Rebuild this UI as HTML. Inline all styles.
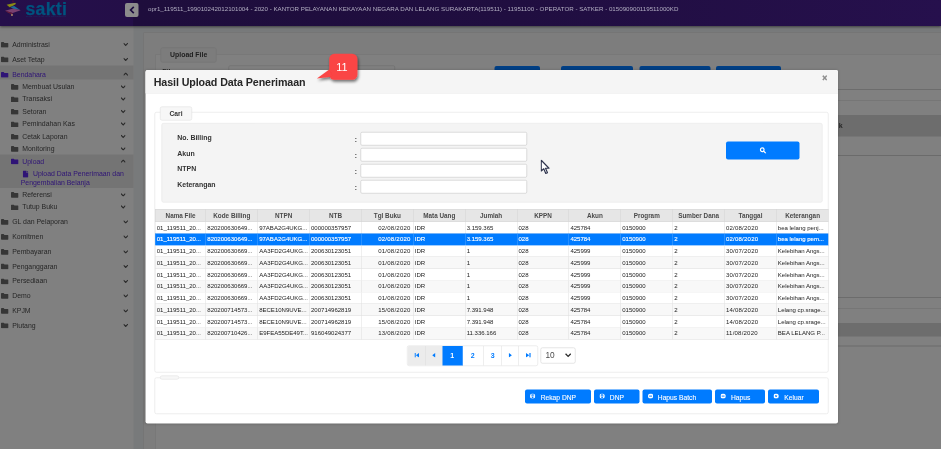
<!DOCTYPE html>
<html><head><meta charset="utf-8"><title>SAKTI</title>
<style>
html,body{margin:0;padding:0}
body{width:941px;height:449px;overflow:hidden;background:#787a7b;font-family:"Liberation Sans",sans-serif}
#w{position:absolute;left:0;top:0;width:1882px;height:898px;transform:scale(.5);transform-origin:0 0;overflow:hidden;background:#787a7b}
#w div,#w span,#w svg{position:absolute;box-sizing:border-box;white-space:nowrap}
#hdr{left:0;top:0;width:1882px;height:52px;background:linear-gradient(90deg,#250f4b 0%,#240f48 14.1%,#1e0d3c 14.2%,#200e40 55%,#26104d 100%);box-shadow:0 1px 5px rgba(0,0,0,.5)}
#logo-t{left:50.8px;top:-2.6px;font-size:35.4px;font-weight:bold;color:#00547f;letter-spacing:0.6px;line-height:40px;-webkit-text-stroke:0.5px #00547f}
#logo-s{left:52px;top:31.2px;font-size:3.24px;color:#1c2e66;letter-spacing:0.04px;line-height:4px;font-weight:bold}
#tog{left:250px;top:6px;width:27.2px;height:28px;background:#8c8c8c;border-radius:4px}
#htxt{left:296px;top:9.2px;font-size:12.42px;line-height:16px;color:#b2aec2;letter-spacing:-0.03px}
#side{left:0;top:51.2px;width:267px;height:848px;background:#808080}
.hl{left:0;width:267px;background:#747474}
.mi{height:20px;font-size:13.8px;line-height:20px;color:#262626}
.mi span{top:0}
.mi .fi{left:0;top:4.6px;width:15.2px;height:11.8px;fill:#363636}
.mi .fi2{left:0;top:2.8px;width:12.4px;height:14.4px;fill:#2f1476}
.mi.act{color:#2f1476}
.mi.act .fi{fill:#2f1476}
.ch{width:8.8px;height:7.2px;fill:none;stroke:#2a2a2a;stroke-width:1.100}
#panel{left:287px;top:64.6px;width:1640px;height:860px;background:#7d7d7d;border:1px solid #707070}
#ufs{left:310.8px;top:108.8px;width:1600px;height:840px;background:#808080;border:1px solid #727272}
#uleg{left:321.4px;top:94.8px;width:111.8px;height:29.8px;background:#7c7c7c;border:1px solid #727272;border-radius:4px;font-size:13.8px;font-weight:bold;color:#1e1e1e;text-align:center;line-height:27.6px}
.bl{height:1.2px;background:#6c6c6c;left:312px;width:1580px}
.band{left:312px;width:1580px;background:#6d6d6d}
.bbtn{top:132.4px;height:24px;background:#003f85;border-radius:4px}
#modal{left:290.8px;top:140.2px;width:1385.2px;height:706.8px;background:#fff;border-radius:4px;box-shadow:0 1px 6px rgba(0,0,0,.22)}
#mhead{left:290.8px;top:140.2px;width:1385.2px;height:46.8px;background:#f5f5f5;border-bottom:1px solid #d6d6d6;border-radius:4px 4px 0 0}
#mtitle{left:307.4px;top:150.8px;font-size:21.4px;font-weight:bold;color:#262626;line-height:28px;letter-spacing:-0.2px}
#mclose{left:1642.6px;top:147.4px;font-size:17px;font-weight:bold;color:#888;line-height:20px;width:14px;text-align:center;-webkit-text-stroke:0.7px #888}
.fs{border:1px solid #ddd;border-radius:4px;background:#fff}
.leg{background:#f7f7f7;border:1px solid #ddd;border-radius:4px;font-size:13.4px;font-weight:bold;color:#333;text-align:center}
#ipanel{left:322.6px;top:246px;width:1322.6px;height:158.8px;background:#f4f4f4;border:1px solid #e2e2e2;border-radius:4px}
.lab{left:354.6px;font-size:13.9px;font-weight:bold;color:#333;line-height:20px;height:20px}
.col{left:709.4px;font-size:13px;font-weight:bold;color:#333;line-height:20px;height:20px}
.inp{left:721px;width:333px;height:27px;background:#fff;border:1px solid #bdbdbd;border-radius:3px}
#sbtn{left:1452.2px;top:283.2px;width:146.4px;height:36px;background:#007bff;border-radius:4px}
.th-row{background:#e6e6e6}
.th{font-size:12.7px;font-weight:bold;color:#4a4a4a;text-align:center;border-left:1px solid #d4d4d4;border-top:1px solid #d4d4d4;border-bottom:1px solid #d4d4d4}
.tr.odd{background:#fff}
.tr.even{background:#f8f8f8}
.tr.sel{background:#007bff}
.td{font-size:12.1px;color:#222;padding:0 2.6px 0 2.4px;border-left:1px solid #dedede;border-bottom:1px solid #dedede;overflow:hidden;letter-spacing:-0.04px}
.td.selc{color:#fff;-webkit-text-stroke:0.24px #fff;border-color:#4da3ff #007bff #007bff #4da3ff}
#tright{left:1656.4px;top:418.2px;width:1px;height:260.4px;background:#dedede}
.pgwrap{border:1px solid #ddd;border-radius:4px;background:#fff;overflow:hidden}
.pg{top:0;height:41px;line-height:38.6px;font-size:14px;font-weight:bold;color:#007bff;text-align:center;border-right:1px solid #ddd}
.pg.cur{background:#007bff;color:#fff;border-color:#007bff}
.pg.dis{background:#ececec}
.pi{left:50%;top:50%;width:9.2px;height:9.2px;margin-left:-4.4px;margin-top:-6.4px;fill:#007bff}
#psel{left:1080.8px;top:694.8px;width:70.6px;height:32.4px;border:1px solid #ccc;border-radius:4px;background:#fff;font-size:16.6px;color:#4a4a4a;line-height:30.4px;padding-left:9.2px}
.btn{background:#007bff;border-radius:4px;color:#fff}
.btn .bi{width:10.4px;height:10.4px}
.btn .bi svg{left:0;top:0;width:10.4px;height:10.4px}
.btn .bt{top:0;font-size:13.4px;line-height:32.8px;height:27.8px;color:#fff;-webkit-text-stroke:0.2px #fff}
</style></head><body>
<div id="w">
<!-- background app -->
<div id="panel"></div>
<div id="ufs"></div>
<div id="uleg">Upload File</div>
<div style="left:324.6px;top:133px;font-size:14px;font-weight:bold;color:#2a2a2a;line-height:18px">File</div>
<div style="left:456.6px;top:131.2px;width:333px;height:26px;background:#808080;border:1px solid #6a6a6a;border-radius:3px"></div>
<div class="bbtn" style="left:989px;width:90.6px"></div>
<div class="bbtn" style="left:1122.4px;width:143.6px"></div>
<div class="bbtn" style="left:1278.6px;width:142.2px"></div>
<div class="bbtn" style="left:1432.2px;width:130.2px"></div>
<div class="bl" style="top:178.4px"></div>
<div class="bl" style="top:200.8px"></div>
<div class="band" style="top:229.6px;height:43.8px"></div>
<div style="left:1677.6px;top:241px;font-size:14px;font-weight:bold;color:#262626;line-height:20px">k</div>
<div class="bl" style="top:309.6px;height:2px;background:#6b6b6b"></div>
<div class="bl" style="top:594.4px"></div>
<div class="bl" style="top:615.6px"></div>
<div class="band" style="top:645.6px;height:27.8px"></div>
<div class="bl" style="top:691px;height:2px;background:#6b6b6b"></div>

<div id="side"></div>
<div class="hl" style="top:131px;height:28.4px"></div>
<div class="hl" style="top:309.2px;height:66.4px"></div>
<div class="mi" style="left:2.2px;top:79px"><svg class="fi" viewBox="0 0 16 12"><path d="M0 1.5C0 .7.7 0 1.5 0h4l1.8 1.8h7.2c.8 0 1.5.7 1.5 1.5v7.2c0 .8-.7 1.5-1.5 1.5h-13C.7 12 0 11.300 0 10.500z"/></svg><span style="left:22.2px">Administrasi</span></div>
<svg class="ch" style="left:247.2px;top:85.4px" viewBox="0 0 4.400 3.600"><path d="M0 0.600 L2.2 3 L4.400 0.600"/></svg>
<div class="mi" style="left:2.2px;top:108.8px"><svg class="fi" viewBox="0 0 16 12"><path d="M0 1.5C0 .7.7 0 1.5 0h4l1.8 1.8h7.2c.8 0 1.5.7 1.5 1.5v7.2c0 .8-.7 1.5-1.5 1.5h-13C.7 12 0 11.300 0 10.500z"/></svg><span style="left:22.2px">Aset Tetap</span></div>
<svg class="ch" style="left:247.2px;top:115.2px" viewBox="0 0 4.400 3.600"><path d="M0 0.600 L2.2 3 L4.400 0.600"/></svg>
<div class="mi act" style="left:2.2px;top:139px"><svg class="fi" viewBox="0 0 16 12"><path d="M0 1.5C0 .7.7 0 1.5 0h4l1.8 1.8h7.2c.8 0 1.5.7 1.5 1.5v7.2c0 .8-.7 1.5-1.5 1.5h-13C.7 12 0 11.300 0 10.500z"/></svg><span style="left:22.2px">Bendahara</span></div>
<svg class="ch" style="left:247.2px;top:145.4px" viewBox="0 0 4.400 3.600"><path d="M0 3 L2.2 0.600 L4.400 3"/></svg>
<div class="mi" style="left:2.2px;top:433.2px"><svg class="fi" viewBox="0 0 16 12"><path d="M0 1.5C0 .7.7 0 1.5 0h4l1.8 1.8h7.2c.8 0 1.5.7 1.5 1.5v7.2c0 .8-.7 1.5-1.5 1.5h-13C.7 12 0 11.300 0 10.500z"/></svg><span style="left:22.2px">GL dan Pelaporan</span></div>
<svg class="ch" style="left:247.2px;top:439.6px" viewBox="0 0 4.400 3.600"><path d="M0 0.600 L2.2 3 L4.400 0.600"/></svg>
<div class="mi" style="left:2.2px;top:463.2px"><svg class="fi" viewBox="0 0 16 12"><path d="M0 1.5C0 .7.7 0 1.5 0h4l1.8 1.8h7.2c.8 0 1.5.7 1.5 1.5v7.2c0 .8-.7 1.5-1.5 1.5h-13C.7 12 0 11.300 0 10.500z"/></svg><span style="left:22.2px">Komitmen</span></div>
<svg class="ch" style="left:247.2px;top:469.6px" viewBox="0 0 4.400 3.600"><path d="M0 0.600 L2.2 3 L4.400 0.600"/></svg>
<div class="mi" style="left:2.2px;top:493.2px"><svg class="fi" viewBox="0 0 16 12"><path d="M0 1.5C0 .7.7 0 1.5 0h4l1.8 1.8h7.2c.8 0 1.5.7 1.5 1.5v7.2c0 .8-.7 1.5-1.5 1.5h-13C.7 12 0 11.300 0 10.500z"/></svg><span style="left:22.2px">Pembayaran</span></div>
<svg class="ch" style="left:247.2px;top:499.6px" viewBox="0 0 4.400 3.600"><path d="M0 0.600 L2.2 3 L4.400 0.600"/></svg>
<div class="mi" style="left:2.2px;top:522.8px"><svg class="fi" viewBox="0 0 16 12"><path d="M0 1.5C0 .7.7 0 1.5 0h4l1.8 1.8h7.2c.8 0 1.5.7 1.5 1.5v7.2c0 .8-.7 1.5-1.5 1.5h-13C.7 12 0 11.300 0 10.500z"/></svg><span style="left:22.2px">Penganggaran</span></div>
<svg class="ch" style="left:247.2px;top:529.2px" viewBox="0 0 4.400 3.600"><path d="M0 0.600 L2.2 3 L4.400 0.600"/></svg>
<div class="mi" style="left:2.2px;top:552.4px"><svg class="fi" viewBox="0 0 16 12"><path d="M0 1.5C0 .7.7 0 1.5 0h4l1.8 1.8h7.2c.8 0 1.5.7 1.5 1.5v7.2c0 .8-.7 1.5-1.5 1.5h-13C.7 12 0 11.300 0 10.500z"/></svg><span style="left:22.2px">Persediaan</span></div>
<svg class="ch" style="left:247.2px;top:558.8px" viewBox="0 0 4.400 3.600"><path d="M0 0.600 L2.2 3 L4.400 0.600"/></svg>
<div class="mi" style="left:2.2px;top:581.8px"><svg class="fi" viewBox="0 0 16 12"><path d="M0 1.5C0 .7.7 0 1.5 0h4l1.8 1.8h7.2c.8 0 1.5.7 1.5 1.5v7.2c0 .8-.7 1.5-1.5 1.5h-13C.7 12 0 11.300 0 10.500z"/></svg><span style="left:22.2px">Demo</span></div>
<svg class="ch" style="left:247.2px;top:588.2px" viewBox="0 0 4.400 3.600"><path d="M0 0.600 L2.2 3 L4.400 0.600"/></svg>
<div class="mi" style="left:2.2px;top:611.4px"><svg class="fi" viewBox="0 0 16 12"><path d="M0 1.5C0 .7.7 0 1.5 0h4l1.8 1.8h7.2c.8 0 1.5.7 1.5 1.5v7.2c0 .8-.7 1.5-1.5 1.5h-13C.7 12 0 11.300 0 10.500z"/></svg><span style="left:22.2px">KPJM</span></div>
<svg class="ch" style="left:247.2px;top:617.8px" viewBox="0 0 4.400 3.600"><path d="M0 0.600 L2.2 3 L4.400 0.600"/></svg>
<div class="mi" style="left:2.2px;top:640.8px"><svg class="fi" viewBox="0 0 16 12"><path d="M0 1.5C0 .7.7 0 1.5 0h4l1.8 1.8h7.2c.8 0 1.5.7 1.5 1.5v7.2c0 .8-.7 1.5-1.5 1.5h-13C.7 12 0 11.300 0 10.500z"/></svg><span style="left:22.2px">Piutang</span></div>
<svg class="ch" style="left:247.2px;top:647.2px" viewBox="0 0 4.400 3.600"><path d="M0 0.600 L2.2 3 L4.400 0.600"/></svg>
<div class="mi" style="left:22.2px;top:163.2px"><svg class="fi" viewBox="0 0 16 12"><path d="M0 1.5C0 .7.7 0 1.5 0h4l1.8 1.8h7.2c.8 0 1.5.7 1.5 1.5v7.2c0 .8-.7 1.5-1.5 1.5h-13C.7 12 0 11.300 0 10.500z"/></svg><span style="left:22.4px">Membuat Usulan</span></div>
<svg class="ch" style="left:242px;top:169.6px" viewBox="0 0 4.400 3.600"><path d="M0 0.600 L2.2 3 L4.400 0.600"/></svg>
<div class="mi" style="left:22.2px;top:188px"><svg class="fi" viewBox="0 0 16 12"><path d="M0 1.5C0 .7.7 0 1.5 0h4l1.8 1.8h7.2c.8 0 1.5.7 1.5 1.5v7.2c0 .8-.7 1.5-1.5 1.5h-13C.7 12 0 11.300 0 10.500z"/></svg><span style="left:22.4px">Transaksi</span></div>
<svg class="ch" style="left:242px;top:194.4px" viewBox="0 0 4.400 3.600"><path d="M0 0.600 L2.2 3 L4.400 0.600"/></svg>
<div class="mi" style="left:22.2px;top:213px"><svg class="fi" viewBox="0 0 16 12"><path d="M0 1.5C0 .7.7 0 1.5 0h4l1.8 1.8h7.2c.8 0 1.5.7 1.5 1.5v7.2c0 .8-.7 1.5-1.5 1.5h-13C.7 12 0 11.300 0 10.500z"/></svg><span style="left:22.4px">Setoran</span></div>
<svg class="ch" style="left:242px;top:219.4px" viewBox="0 0 4.400 3.600"><path d="M0 0.600 L2.2 3 L4.400 0.600"/></svg>
<div class="mi" style="left:22.2px;top:238px"><svg class="fi" viewBox="0 0 16 12"><path d="M0 1.5C0 .7.7 0 1.5 0h4l1.8 1.8h7.2c.8 0 1.5.7 1.5 1.5v7.2c0 .8-.7 1.5-1.5 1.5h-13C.7 12 0 11.300 0 10.500z"/></svg><span style="left:22.4px">Pemindahan Kas</span></div>
<svg class="ch" style="left:242px;top:244.4px" viewBox="0 0 4.400 3.600"><path d="M0 0.600 L2.2 3 L4.400 0.600"/></svg>
<div class="mi" style="left:22.2px;top:263px"><svg class="fi" viewBox="0 0 16 12"><path d="M0 1.5C0 .7.7 0 1.5 0h4l1.8 1.8h7.2c.8 0 1.5.7 1.5 1.5v7.2c0 .8-.7 1.5-1.5 1.5h-13C.7 12 0 11.300 0 10.500z"/></svg><span style="left:22.4px">Cetak Laporan</span></div>
<svg class="ch" style="left:242px;top:269.4px" viewBox="0 0 4.400 3.600"><path d="M0 0.600 L2.2 3 L4.400 0.600"/></svg>
<div class="mi" style="left:22.2px;top:287.6px"><svg class="fi" viewBox="0 0 16 12"><path d="M0 1.5C0 .7.7 0 1.5 0h4l1.8 1.8h7.2c.8 0 1.5.7 1.5 1.5v7.2c0 .8-.7 1.5-1.5 1.5h-13C.7 12 0 11.300 0 10.500z"/></svg><span style="left:22.4px">Monitoring</span></div>
<svg class="ch" style="left:242px;top:294px" viewBox="0 0 4.400 3.600"><path d="M0 0.600 L2.2 3 L4.400 0.600"/></svg>
<div class="mi act" style="left:22.2px;top:312.6px"><svg class="fi" viewBox="0 0 16 12"><path d="M0 1.5C0 .7.7 0 1.5 0h4l1.8 1.8h7.2c.8 0 1.5.7 1.5 1.5v7.2c0 .8-.7 1.5-1.5 1.5h-13C.7 12 0 11.300 0 10.500z"/></svg><span style="left:22.4px">Upload</span></div>
<svg class="ch" style="left:242px;top:319px" viewBox="0 0 4.400 3.600"><path d="M0 3 L2.2 0.600 L4.400 3"/></svg>
<div class="mi" style="left:22.2px;top:379.4px"><svg class="fi" viewBox="0 0 16 12"><path d="M0 1.5C0 .7.7 0 1.5 0h4l1.8 1.8h7.2c.8 0 1.5.7 1.5 1.5v7.2c0 .8-.7 1.5-1.5 1.5h-13C.7 12 0 11.300 0 10.500z"/></svg><span style="left:22.4px">Referensi</span></div>
<svg class="ch" style="left:242px;top:385.8px" viewBox="0 0 4.400 3.600"><path d="M0 0.600 L2.2 3 L4.400 0.600"/></svg>
<div class="mi" style="left:22.2px;top:404px"><svg class="fi" viewBox="0 0 16 12"><path d="M0 1.5C0 .7.7 0 1.5 0h4l1.8 1.8h7.2c.8 0 1.5.7 1.5 1.5v7.2c0 .8-.7 1.5-1.5 1.5h-13C.7 12 0 11.300 0 10.500z"/></svg><span style="left:22.4px">Tutup Buku</span></div>
<svg class="ch" style="left:242px;top:410.4px" viewBox="0 0 4.400 3.600"><path d="M0 0.600 L2.2 3 L4.400 0.600"/></svg>
<div class="mi act" style="left:44.6px;top:338px"><svg class="fi2" viewBox="0 0 12 16"><path d="M0 1.500C0 .7.7 0 1.500 0H7v4.500h5V14.500c0 .8-.7 1.500-1.500 1.500h-9C.7 16 0 15.300 0 14.500zM8 0l4 3.500H8z"/></svg><span style="left:21.4px">Upload Data Penerimaan dan</span></div>
<div class="mi act" style="left:41.4px;top:355.8px"><span style="left:0px">Pengembalian Belanja</span></div>

<div id="hdr">
  <svg style="left:0px;top:0px;width:60px;height:40px" viewBox="0 0 30 20">
    <path d="M12.400 .3L13.300 .5L13.600 2.400L12.800 2.600z" fill="#6e1030"/>
    <path d="M6.600 4.800L15.300 2.700L15.900 3.900L12.900 5.700L9.600 7.200z" fill="#8a8a14"/>
    <path d="M10.300 7L14.200 5.900L20.200 10L13.300 8.700z" fill="#1c6c9c"/>
    <path d="M5 10.700L13.300 8.600L20.800 10.200L12.600 13z" fill="#7a3f70"/>
    <path d="M5 10.700L12.600 13L12.200 14.400L8 12.800z" fill="#6a1c3a"/>
    <path d="M10.900 14.300L12.800 14.100L12.700 15.900L11.300 16z" fill="#a88468"/>
  </svg>
  <div id="logo-t">sakti</div>
  <div id="logo-s">SISTEM APLIKASI KEUANGAN TINGKAT INSTANSI</div>
  <div id="tog"><svg style="left:7.6px;top:6px;width:12px;height:16px" viewBox="0 0 6 8"><path d="M4.800 .8L1.600 4L4.800 7.200" fill="none" stroke="#1d0e40" stroke-width="1.700"/></svg></div>
  <div id="htxt">opr1_119511_199010242012101004 - 2020 - KANTOR PELAYANAN KEKAYAAN NEGARA DAN LELANG SURAKARTA(119511) - 11951100 - OPERATOR - SATKER - 015090900119511000KD</div>
</div>

<!-- modal -->
<div id="modal"></div>
<div id="mhead"></div>
<div id="mtitle">Hasil Upload Data Penerimaan</div>
<div id="mclose">×</div>

<div class="fs" style="left:309.4px;top:224.4px;width:1347.8px;height:520.4px"></div>
<div class="leg" style="left:320.4px;top:212.8px;width:63.2px;height:28.2px;line-height:27.8px">Cari</div>
<div id="ipanel"></div>
<div class="lab" style="top:263.6px">No. Billing</div>
<div class="lab" style="top:296.2px">Akun</div>
<div class="lab" style="top:326.4px">NTPN</div>
<div class="lab" style="top:359.2px">Keterangan</div>
<div class="col" style="top:269.4px">:</div>
<div class="col" style="top:301.6px">:</div>
<div class="col" style="top:333.6px">:</div>
<div class="col" style="top:365.8px">:</div>
<div class="inp" style="top:264px"></div>
<div class="inp" style="top:296.2px"></div>
<div class="inp" style="top:328.2px"></div>
<div class="inp" style="top:360.4px"></div>
<div id="sbtn"><svg style="left:66.8px;top:10.6px;width:13.6px;height:13.6px" viewBox="0 0 16 16"><circle cx="6.500" cy="6.500" r="4.300" fill="none" stroke="#fff" stroke-width="2.800"/><path d="M10 10L14.500 14.500" stroke="#fff" stroke-width="2.800" stroke-linecap="round"/></svg></div>

<div class="th-row" style="left:310px;top:417.8px;width:1347px;height:25.8px"></div>
<div class="th" style="left:310px;top:417.8px;width:101.2px;height:25.8px;line-height:27px">Nama File</div>
<div class="th" style="left:411.2px;top:417.8px;width:103.74px;height:25.8px;line-height:27px">Kode Billing</div>
<div class="th" style="left:514.94px;top:417.8px;width:103.74px;height:25.8px;line-height:27px">NTPN</div>
<div class="th" style="left:618.68px;top:417.8px;width:103.74px;height:25.8px;line-height:27px">NTB</div>
<div class="th" style="left:722.42px;top:417.8px;width:103.74px;height:25.8px;line-height:27px">Tgl Buku</div>
<div class="th" style="left:826.16px;top:417.8px;width:103.74px;height:25.8px;line-height:27px">Mata Uang</div>
<div class="th" style="left:929.9px;top:417.8px;width:103.74px;height:25.8px;line-height:27px">Jumlah</div>
<div class="th" style="left:1033.64px;top:417.8px;width:103.74px;height:25.8px;line-height:27px">KPPN</div>
<div class="th" style="left:1137.38px;top:417.8px;width:103.74px;height:25.8px;line-height:27px">Akun</div>
<div class="th" style="left:1241.12px;top:417.8px;width:103.74px;height:25.8px;line-height:27px">Program</div>
<div class="th" style="left:1344.86px;top:417.8px;width:103.74px;height:25.8px;line-height:27px">Sumber Dana</div>
<div class="th" style="left:1448.6px;top:417.8px;width:103.74px;height:25.8px;line-height:27px">Tanggal</div>
<div class="th" style="left:1552.34px;top:417.8px;width:104.66px;height:25.8px;line-height:27px">Keterangan</div>
<div class="tr odd" style="left:310px;top:443.6px;width:1347px;height:23.5px"></div>
<div class="td" style="left:310px;top:443.6px;width:101.2px;height:23.5px;line-height:23.9px;text-align:left">01_119511_20...</div>
<div class="td" style="left:411.2px;top:443.6px;width:103.74px;height:23.5px;line-height:23.9px;text-align:left">820200630649...</div>
<div class="td" style="left:514.94px;top:443.6px;width:103.74px;height:23.5px;line-height:23.9px;text-align:left">97ABA2G4UKG...</div>
<div class="td" style="left:618.68px;top:443.6px;width:103.74px;height:23.5px;line-height:23.9px;text-align:left">000000357957</div>
<div class="td" style="left:722.42px;top:443.6px;width:103.74px;height:23.5px;line-height:23.9px;text-align:right;padding-right:4.8px;letter-spacing:0.44px">02/08/2020</div>
<div class="td" style="left:826.16px;top:443.6px;width:103.74px;height:23.5px;line-height:23.9px;text-align:left">IDR</div>
<div class="td" style="left:929.9px;top:443.6px;width:103.74px;height:23.5px;line-height:23.9px;text-align:left">3.159.365</div>
<div class="td" style="left:1033.64px;top:443.6px;width:103.74px;height:23.5px;line-height:23.9px;text-align:left">028</div>
<div class="td" style="left:1137.38px;top:443.6px;width:103.74px;height:23.5px;line-height:23.9px;text-align:left">425784</div>
<div class="td" style="left:1241.12px;top:443.6px;width:103.74px;height:23.5px;line-height:23.9px;text-align:left">0150900</div>
<div class="td" style="left:1344.86px;top:443.6px;width:103.74px;height:23.5px;line-height:23.9px;text-align:left">2</div>
<div class="td" style="left:1448.6px;top:443.6px;width:103.74px;height:23.5px;line-height:23.9px;text-align:left;letter-spacing:0.4px">02/08/2020</div>
<div class="td" style="left:1552.34px;top:443.6px;width:104.66px;height:23.5px;line-height:23.9px;text-align:left">bea lelang penj...</div>
<div class="tr sel" style="left:310px;top:467.1px;width:1347px;height:23.5px"></div>
<div class="td selc" style="left:310px;top:467.1px;width:101.2px;height:23.5px;line-height:23.9px;text-align:left">01_119511_20...</div>
<div class="td selc" style="left:411.2px;top:467.1px;width:103.74px;height:23.5px;line-height:23.9px;text-align:left">820200630649...</div>
<div class="td selc" style="left:514.94px;top:467.1px;width:103.74px;height:23.5px;line-height:23.9px;text-align:left">97ABA2G4UKG...</div>
<div class="td selc" style="left:618.68px;top:467.1px;width:103.74px;height:23.5px;line-height:23.9px;text-align:left">000000357957</div>
<div class="td selc" style="left:722.42px;top:467.1px;width:103.74px;height:23.5px;line-height:23.9px;text-align:right;padding-right:4.8px;letter-spacing:0.44px">02/08/2020</div>
<div class="td selc" style="left:826.16px;top:467.1px;width:103.74px;height:23.5px;line-height:23.9px;text-align:left">IDR</div>
<div class="td selc" style="left:929.9px;top:467.1px;width:103.74px;height:23.5px;line-height:23.9px;text-align:left">3.159.365</div>
<div class="td selc" style="left:1033.64px;top:467.1px;width:103.74px;height:23.5px;line-height:23.9px;text-align:left">028</div>
<div class="td selc" style="left:1137.38px;top:467.1px;width:103.74px;height:23.5px;line-height:23.9px;text-align:left">425784</div>
<div class="td selc" style="left:1241.12px;top:467.1px;width:103.74px;height:23.5px;line-height:23.9px;text-align:left">0150900</div>
<div class="td selc" style="left:1344.86px;top:467.1px;width:103.74px;height:23.5px;line-height:23.9px;text-align:left">2</div>
<div class="td selc" style="left:1448.6px;top:467.1px;width:103.74px;height:23.5px;line-height:23.9px;text-align:left;letter-spacing:0.4px">02/08/2020</div>
<div class="td selc" style="left:1552.34px;top:467.1px;width:104.66px;height:23.5px;line-height:23.9px;text-align:left">bea lelang pem...</div>
<div class="tr odd" style="left:310px;top:490.6px;width:1347px;height:23.5px"></div>
<div class="td" style="left:310px;top:490.6px;width:101.2px;height:23.5px;line-height:23.9px;text-align:left">01_119511_20...</div>
<div class="td" style="left:411.2px;top:490.6px;width:103.74px;height:23.5px;line-height:23.9px;text-align:left">820200630669...</div>
<div class="td" style="left:514.94px;top:490.6px;width:103.74px;height:23.5px;line-height:23.9px;text-align:left">AA3FD2G4UKG...</div>
<div class="td" style="left:618.68px;top:490.6px;width:103.74px;height:23.5px;line-height:23.9px;text-align:left">200630123051</div>
<div class="td" style="left:722.42px;top:490.6px;width:103.74px;height:23.5px;line-height:23.9px;text-align:right;padding-right:4.8px;letter-spacing:0.44px">01/08/2020</div>
<div class="td" style="left:826.16px;top:490.6px;width:103.74px;height:23.5px;line-height:23.9px;text-align:left">IDR</div>
<div class="td" style="left:929.9px;top:490.6px;width:103.74px;height:23.5px;line-height:23.9px;text-align:left">1</div>
<div class="td" style="left:1033.64px;top:490.6px;width:103.74px;height:23.5px;line-height:23.9px;text-align:left">028</div>
<div class="td" style="left:1137.38px;top:490.6px;width:103.74px;height:23.5px;line-height:23.9px;text-align:left">425999</div>
<div class="td" style="left:1241.12px;top:490.6px;width:103.74px;height:23.5px;line-height:23.9px;text-align:left">0150900</div>
<div class="td" style="left:1344.86px;top:490.6px;width:103.74px;height:23.5px;line-height:23.9px;text-align:left">2</div>
<div class="td" style="left:1448.6px;top:490.6px;width:103.74px;height:23.5px;line-height:23.9px;text-align:left;letter-spacing:0.4px">30/07/2020</div>
<div class="td" style="left:1552.34px;top:490.6px;width:104.66px;height:23.5px;line-height:23.9px;text-align:left">Kelebihan Angs...</div>
<div class="tr even" style="left:310px;top:514.1px;width:1347px;height:23.5px"></div>
<div class="td" style="left:310px;top:514.1px;width:101.2px;height:23.5px;line-height:23.9px;text-align:left">01_119511_20...</div>
<div class="td" style="left:411.2px;top:514.1px;width:103.74px;height:23.5px;line-height:23.9px;text-align:left">820200630669...</div>
<div class="td" style="left:514.94px;top:514.1px;width:103.74px;height:23.5px;line-height:23.9px;text-align:left">AA3FD2G4UKG...</div>
<div class="td" style="left:618.68px;top:514.1px;width:103.74px;height:23.5px;line-height:23.9px;text-align:left">200630123051</div>
<div class="td" style="left:722.42px;top:514.1px;width:103.74px;height:23.5px;line-height:23.9px;text-align:right;padding-right:4.8px;letter-spacing:0.44px">01/08/2020</div>
<div class="td" style="left:826.16px;top:514.1px;width:103.74px;height:23.5px;line-height:23.9px;text-align:left">IDR</div>
<div class="td" style="left:929.9px;top:514.1px;width:103.74px;height:23.5px;line-height:23.9px;text-align:left">1</div>
<div class="td" style="left:1033.64px;top:514.1px;width:103.74px;height:23.5px;line-height:23.9px;text-align:left">028</div>
<div class="td" style="left:1137.38px;top:514.1px;width:103.74px;height:23.5px;line-height:23.9px;text-align:left">425999</div>
<div class="td" style="left:1241.12px;top:514.1px;width:103.74px;height:23.5px;line-height:23.9px;text-align:left">0150900</div>
<div class="td" style="left:1344.86px;top:514.1px;width:103.74px;height:23.5px;line-height:23.9px;text-align:left">2</div>
<div class="td" style="left:1448.6px;top:514.1px;width:103.74px;height:23.5px;line-height:23.9px;text-align:left;letter-spacing:0.4px">30/07/2020</div>
<div class="td" style="left:1552.34px;top:514.1px;width:104.66px;height:23.5px;line-height:23.9px;text-align:left">Kelebihan Angs...</div>
<div class="tr odd" style="left:310px;top:537.6px;width:1347px;height:23.5px"></div>
<div class="td" style="left:310px;top:537.6px;width:101.2px;height:23.5px;line-height:23.9px;text-align:left">01_119511_20...</div>
<div class="td" style="left:411.2px;top:537.6px;width:103.74px;height:23.5px;line-height:23.9px;text-align:left">820200630669...</div>
<div class="td" style="left:514.94px;top:537.6px;width:103.74px;height:23.5px;line-height:23.9px;text-align:left">AA3FD2G4UKG...</div>
<div class="td" style="left:618.68px;top:537.6px;width:103.74px;height:23.5px;line-height:23.9px;text-align:left">200630123051</div>
<div class="td" style="left:722.42px;top:537.6px;width:103.74px;height:23.5px;line-height:23.9px;text-align:right;padding-right:4.8px;letter-spacing:0.44px">01/08/2020</div>
<div class="td" style="left:826.16px;top:537.6px;width:103.74px;height:23.5px;line-height:23.9px;text-align:left">IDR</div>
<div class="td" style="left:929.9px;top:537.6px;width:103.74px;height:23.5px;line-height:23.9px;text-align:left">1</div>
<div class="td" style="left:1033.64px;top:537.6px;width:103.74px;height:23.5px;line-height:23.9px;text-align:left">028</div>
<div class="td" style="left:1137.38px;top:537.6px;width:103.74px;height:23.5px;line-height:23.9px;text-align:left">425999</div>
<div class="td" style="left:1241.12px;top:537.6px;width:103.74px;height:23.5px;line-height:23.9px;text-align:left">0150900</div>
<div class="td" style="left:1344.86px;top:537.6px;width:103.74px;height:23.5px;line-height:23.9px;text-align:left">2</div>
<div class="td" style="left:1448.6px;top:537.6px;width:103.74px;height:23.5px;line-height:23.9px;text-align:left;letter-spacing:0.4px">30/07/2020</div>
<div class="td" style="left:1552.34px;top:537.6px;width:104.66px;height:23.5px;line-height:23.9px;text-align:left">Kelebihan Angs...</div>
<div class="tr even" style="left:310px;top:561.1px;width:1347px;height:23.5px"></div>
<div class="td" style="left:310px;top:561.1px;width:101.2px;height:23.5px;line-height:23.9px;text-align:left">01_119511_20...</div>
<div class="td" style="left:411.2px;top:561.1px;width:103.74px;height:23.5px;line-height:23.9px;text-align:left">820200630669...</div>
<div class="td" style="left:514.94px;top:561.1px;width:103.74px;height:23.5px;line-height:23.9px;text-align:left">AA3FD2G4UKG...</div>
<div class="td" style="left:618.68px;top:561.1px;width:103.74px;height:23.5px;line-height:23.9px;text-align:left">200630123051</div>
<div class="td" style="left:722.42px;top:561.1px;width:103.74px;height:23.5px;line-height:23.9px;text-align:right;padding-right:4.8px;letter-spacing:0.44px">01/08/2020</div>
<div class="td" style="left:826.16px;top:561.1px;width:103.74px;height:23.5px;line-height:23.9px;text-align:left">IDR</div>
<div class="td" style="left:929.9px;top:561.1px;width:103.74px;height:23.5px;line-height:23.9px;text-align:left">1</div>
<div class="td" style="left:1033.64px;top:561.1px;width:103.74px;height:23.5px;line-height:23.9px;text-align:left">028</div>
<div class="td" style="left:1137.38px;top:561.1px;width:103.74px;height:23.5px;line-height:23.9px;text-align:left">425999</div>
<div class="td" style="left:1241.12px;top:561.1px;width:103.74px;height:23.5px;line-height:23.9px;text-align:left">0150900</div>
<div class="td" style="left:1344.86px;top:561.1px;width:103.74px;height:23.5px;line-height:23.9px;text-align:left">2</div>
<div class="td" style="left:1448.6px;top:561.1px;width:103.74px;height:23.5px;line-height:23.9px;text-align:left;letter-spacing:0.4px">30/07/2020</div>
<div class="td" style="left:1552.34px;top:561.1px;width:104.66px;height:23.5px;line-height:23.9px;text-align:left">Kelebihan Angs...</div>
<div class="tr odd" style="left:310px;top:584.6px;width:1347px;height:23.5px"></div>
<div class="td" style="left:310px;top:584.6px;width:101.2px;height:23.5px;line-height:23.9px;text-align:left">01_119511_20...</div>
<div class="td" style="left:411.2px;top:584.6px;width:103.74px;height:23.5px;line-height:23.9px;text-align:left">820200630669...</div>
<div class="td" style="left:514.94px;top:584.6px;width:103.74px;height:23.5px;line-height:23.9px;text-align:left">AA3FD2G4UKG...</div>
<div class="td" style="left:618.68px;top:584.6px;width:103.74px;height:23.5px;line-height:23.9px;text-align:left">200630123051</div>
<div class="td" style="left:722.42px;top:584.6px;width:103.74px;height:23.5px;line-height:23.9px;text-align:right;padding-right:4.8px;letter-spacing:0.44px">01/08/2020</div>
<div class="td" style="left:826.16px;top:584.6px;width:103.74px;height:23.5px;line-height:23.9px;text-align:left">IDR</div>
<div class="td" style="left:929.9px;top:584.6px;width:103.74px;height:23.5px;line-height:23.9px;text-align:left">1</div>
<div class="td" style="left:1033.64px;top:584.6px;width:103.74px;height:23.5px;line-height:23.9px;text-align:left">028</div>
<div class="td" style="left:1137.38px;top:584.6px;width:103.74px;height:23.5px;line-height:23.9px;text-align:left">425999</div>
<div class="td" style="left:1241.12px;top:584.6px;width:103.74px;height:23.5px;line-height:23.9px;text-align:left">0150900</div>
<div class="td" style="left:1344.86px;top:584.6px;width:103.74px;height:23.5px;line-height:23.9px;text-align:left">2</div>
<div class="td" style="left:1448.6px;top:584.6px;width:103.74px;height:23.5px;line-height:23.9px;text-align:left;letter-spacing:0.4px">30/07/2020</div>
<div class="td" style="left:1552.34px;top:584.6px;width:104.66px;height:23.5px;line-height:23.9px;text-align:left">Kelebihan Angs...</div>
<div class="tr even" style="left:310px;top:608.1px;width:1347px;height:23.5px"></div>
<div class="td" style="left:310px;top:608.1px;width:101.2px;height:23.5px;line-height:23.9px;text-align:left">01_119511_20...</div>
<div class="td" style="left:411.2px;top:608.1px;width:103.74px;height:23.5px;line-height:23.9px;text-align:left">820200714573...</div>
<div class="td" style="left:514.94px;top:608.1px;width:103.74px;height:23.5px;line-height:23.9px;text-align:left">8ECE10N9UVE...</div>
<div class="td" style="left:618.68px;top:608.1px;width:103.74px;height:23.5px;line-height:23.9px;text-align:left">200714962819</div>
<div class="td" style="left:722.42px;top:608.1px;width:103.74px;height:23.5px;line-height:23.9px;text-align:right;padding-right:4.8px;letter-spacing:0.44px">15/08/2020</div>
<div class="td" style="left:826.16px;top:608.1px;width:103.74px;height:23.5px;line-height:23.9px;text-align:left">IDR</div>
<div class="td" style="left:929.9px;top:608.1px;width:103.74px;height:23.5px;line-height:23.9px;text-align:left">7.391.948</div>
<div class="td" style="left:1033.64px;top:608.1px;width:103.74px;height:23.5px;line-height:23.9px;text-align:left">028</div>
<div class="td" style="left:1137.38px;top:608.1px;width:103.74px;height:23.5px;line-height:23.9px;text-align:left">425784</div>
<div class="td" style="left:1241.12px;top:608.1px;width:103.74px;height:23.5px;line-height:23.9px;text-align:left">0150900</div>
<div class="td" style="left:1344.86px;top:608.1px;width:103.74px;height:23.5px;line-height:23.9px;text-align:left">2</div>
<div class="td" style="left:1448.6px;top:608.1px;width:103.74px;height:23.5px;line-height:23.9px;text-align:left;letter-spacing:0.4px">14/08/2020</div>
<div class="td" style="left:1552.34px;top:608.1px;width:104.66px;height:23.5px;line-height:23.9px;text-align:left">Lelang cp.srage...</div>
<div class="tr odd" style="left:310px;top:631.6px;width:1347px;height:23.5px"></div>
<div class="td" style="left:310px;top:631.6px;width:101.2px;height:23.5px;line-height:23.9px;text-align:left">01_119511_20...</div>
<div class="td" style="left:411.2px;top:631.6px;width:103.74px;height:23.5px;line-height:23.9px;text-align:left">820200714573...</div>
<div class="td" style="left:514.94px;top:631.6px;width:103.74px;height:23.5px;line-height:23.9px;text-align:left">8ECE10N9UVE...</div>
<div class="td" style="left:618.68px;top:631.6px;width:103.74px;height:23.5px;line-height:23.9px;text-align:left">200714962819</div>
<div class="td" style="left:722.42px;top:631.6px;width:103.74px;height:23.5px;line-height:23.9px;text-align:right;padding-right:4.8px;letter-spacing:0.44px">15/08/2020</div>
<div class="td" style="left:826.16px;top:631.6px;width:103.74px;height:23.5px;line-height:23.9px;text-align:left">IDR</div>
<div class="td" style="left:929.9px;top:631.6px;width:103.74px;height:23.5px;line-height:23.9px;text-align:left">7.391.948</div>
<div class="td" style="left:1033.64px;top:631.6px;width:103.74px;height:23.5px;line-height:23.9px;text-align:left">028</div>
<div class="td" style="left:1137.38px;top:631.6px;width:103.74px;height:23.5px;line-height:23.9px;text-align:left">425784</div>
<div class="td" style="left:1241.12px;top:631.6px;width:103.74px;height:23.5px;line-height:23.9px;text-align:left">0150900</div>
<div class="td" style="left:1344.86px;top:631.6px;width:103.74px;height:23.5px;line-height:23.9px;text-align:left">2</div>
<div class="td" style="left:1448.6px;top:631.6px;width:103.74px;height:23.5px;line-height:23.9px;text-align:left;letter-spacing:0.4px">14/08/2020</div>
<div class="td" style="left:1552.34px;top:631.6px;width:104.66px;height:23.5px;line-height:23.9px;text-align:left">Lelang cp.srage...</div>
<div class="tr even" style="left:310px;top:655.1px;width:1347px;height:23.5px"></div>
<div class="td" style="left:310px;top:655.1px;width:101.2px;height:23.5px;line-height:23.9px;text-align:left">01_119511_20...</div>
<div class="td" style="left:411.2px;top:655.1px;width:103.74px;height:23.5px;line-height:23.9px;text-align:left">820200710426...</div>
<div class="td" style="left:514.94px;top:655.1px;width:103.74px;height:23.5px;line-height:23.9px;text-align:left">E9FEA55DE49T...</div>
<div class="td" style="left:618.68px;top:655.1px;width:103.74px;height:23.5px;line-height:23.9px;text-align:left">916049024377</div>
<div class="td" style="left:722.42px;top:655.1px;width:103.74px;height:23.5px;line-height:23.9px;text-align:right;padding-right:4.8px;letter-spacing:0.44px">13/08/2020</div>
<div class="td" style="left:826.16px;top:655.1px;width:103.74px;height:23.5px;line-height:23.9px;text-align:left">IDR</div>
<div class="td" style="left:929.9px;top:655.1px;width:103.74px;height:23.5px;line-height:23.9px;text-align:left">11.336.166</div>
<div class="td" style="left:1033.64px;top:655.1px;width:103.74px;height:23.5px;line-height:23.9px;text-align:left">028</div>
<div class="td" style="left:1137.38px;top:655.1px;width:103.74px;height:23.5px;line-height:23.9px;text-align:left">425784</div>
<div class="td" style="left:1241.12px;top:655.1px;width:103.74px;height:23.5px;line-height:23.9px;text-align:left">0150900</div>
<div class="td" style="left:1344.86px;top:655.1px;width:103.74px;height:23.5px;line-height:23.9px;text-align:left">2</div>
<div class="td" style="left:1448.6px;top:655.1px;width:103.74px;height:23.5px;line-height:23.9px;text-align:left;letter-spacing:0.4px">11/08/2020</div>
<div class="td" style="left:1552.34px;top:655.1px;width:104.66px;height:23.5px;line-height:23.9px;text-align:left">BEA LELANG P...</div>
<div id="tright"></div>

<div class="pgwrap" style="left:814.4px;top:690.8px;width:261.2px;height:41px">
<div class="pg dis" style="left:0px;width:36.4px"><svg class="pi" viewBox="0 0 5 5"><rect x="0" y="0" width="1.300" height="5"/><path d="M5 0L1.500 2.500L5 5z"/></svg></div>
<div class="pg dis" style="left:36.4px;width:33px"><svg class="pi" viewBox="0 0 5 5"><path d="M4 0L.8 2.500L4 5z"/></svg></div>
<div class="pg cur" style="left:69.4px;width:39.8px">1</div>
<div class="pg" style="left:109.2px;width:43px">2</div>
<div class="pg" style="left:152.2px;width:36.4px">3</div>
<div class="pg" style="left:188.6px;width:34px"><svg class="pi" viewBox="0 0 5 5"><path d="M1 0L4.200 2.500L1 5z"/></svg></div>
<div class="pg" style="left:222.6px;width:38.6px"><svg class="pi" viewBox="0 0 5 5"><rect x="3.700" y="0" width="1.300" height="5"/><path d="M0 0L3.500 2.500L0 5z"/></svg></div>
</div>
<div id="psel">10<svg style="left:48px;top:10.4px;width:12.6px;height:9px" viewBox="0 0 5.600 4"><path d="M.5 .7L2.800 3L5.100 .7" fill="none" stroke="#2a2a2a" stroke-width="1.150"/></svg></div>

<div class="fs" style="left:309.4px;top:755.2px;width:1347.8px;height:73px"></div>
<div class="leg" style="left:320px;top:751px;width:38px;height:8.4px"></div>
<div class="btn" style="left:1049.6px;top:779px;width:132.6px;height:27.8px"><span class="bi" style="left:10.8px;top:7.8px"><svg viewBox="0 0 16 16"><circle cx="8" cy="8" r="8" fill="#fff"/><rect x="4.500" y="2.500" width="7" height="4" fill="#007bff"/><rect x="5.500" y="9.500" width="5" height="4.500" fill="#007bff"/><rect x="2" y="7" width="12" height="1.200" fill="#007bff"/></svg></span><span class="bt" style="left:31.8px">Rekap DNP</span></div>
<div class="btn" style="left:1188px;top:779px;width:91.2px;height:27.8px"><span class="bi" style="left:11.2px;top:7.8px"><svg viewBox="0 0 16 16"><circle cx="8" cy="8" r="8" fill="#fff"/><rect x="4.500" y="2.500" width="7" height="4" fill="#007bff"/><rect x="5.500" y="9.500" width="5" height="4.500" fill="#007bff"/><rect x="2" y="7" width="12" height="1.200" fill="#007bff"/></svg></span><span class="bt" style="left:31.6px">DNP</span></div>
<div class="btn" style="left:1284.8px;top:779px;width:139.6px;height:27.8px"><span class="bi" style="left:11px;top:7.8px"><svg viewBox="0 0 16 16"><circle cx="8" cy="8" r="8" fill="#fff"/><rect x="3.500" y="6.500" width="9" height="3" fill="#007bff"/></svg></span><span class="bt" style="left:30.8px">Hapus Batch</span></div>
<div class="btn" style="left:1430px;top:779px;width:100.4px;height:27.8px"><span class="bi" style="left:11.4px;top:7.8px"><svg viewBox="0 0 16 16"><circle cx="8" cy="8" r="8" fill="#fff"/><rect x="3.500" y="6.500" width="9" height="3" fill="#007bff"/></svg></span><span class="bt" style="left:31.8px">Hapus</span></div>
<div class="btn" style="left:1536.2px;top:779px;width:102px;height:27.8px"><span class="bi" style="left:11.2px;top:7.8px"><svg viewBox="0 0 16 16"><circle cx="8" cy="8" r="8" fill="#fff"/><path d="M5 5L11 11M11 5L5 11" stroke="#007bff" stroke-width="2.400"/></svg></span><span class="bt" style="left:32.4px">Keluar</span></div>

<!-- callout -->
<svg style="left:612px;top:88px;width:128px;height:100px;overflow:visible" viewBox="0 0 64 50">
  <defs><filter id="sh" x="-30%" y="-30%" width="170%" height="180%"><feGaussianBlur in="SourceAlpha" stdDeviation="1.500"/><feOffset dx="1.200" dy="2.200"/><feComponentTransfer><feFuncA type="linear" slope=".55"/></feComponentTransfer><feMerge><feMergeNode/><feMergeNode in="SourceGraphic"/></feMerge></filter></defs>
  <g filter="url(#sh)" fill="#fa4444">
    <rect x="23.2" y="9.700" width="28.2" height="26.1" rx="5.200"/>
    <path d="M23.6 25.200 L10.900 34.400 L27 32.600z"/>
  </g>
  <text x="36" y="27" font-family="Liberation Sans, sans-serif" font-size="10.9" fill="#fff" text-anchor="middle">11</text>
</svg>

<!-- mouse cursor -->
<svg style="left:1080.6px;top:318.6px;width:21px;height:31px" viewBox="0 0 21 31"><path d="M1.500 1.500 L1.500 23 L6.500 18.500 L10.500 28 L14 26.500 L10 17.500 L17 17.500z" fill="#fff" stroke="#30364f" stroke-width="2.300" stroke-linejoin="round"/></svg>
</div>
</body></html>
